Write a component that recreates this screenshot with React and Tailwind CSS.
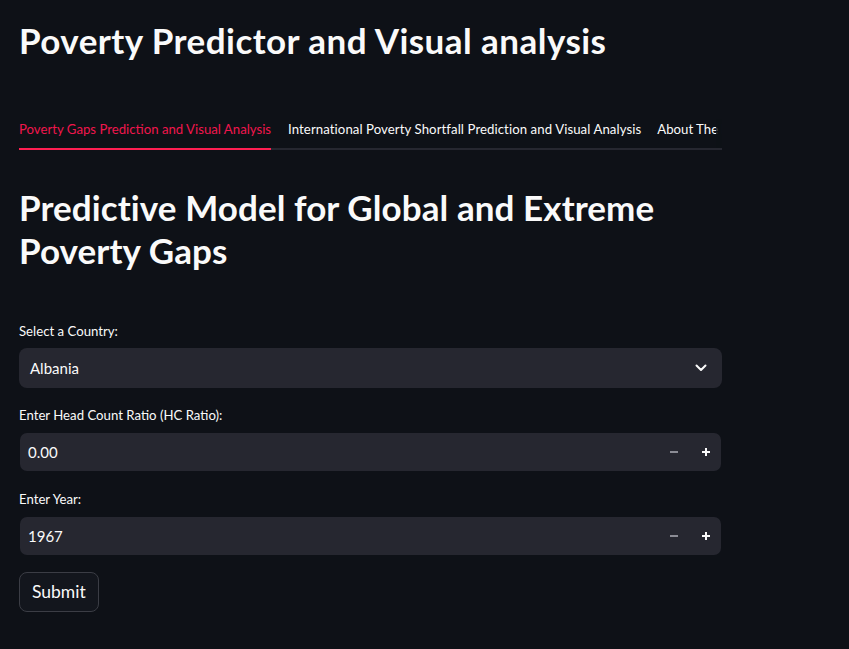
function Chevron() {
  return (
    <svg width="12" height="8" viewBox="0 0 12 8" fill="none" className="shrink-0">
      <path d="M1.5 1.5 L6 6 L10.5 1.5" stroke="#fafafa" strokeWidth="2" strokeLinecap="round" strokeLinejoin="round" />
    </svg>
  );
}

function Minus() {
  return (
    <svg width="10" height="10" viewBox="0 0 10 10">
      <rect x="1" y="4" width="8" height="2" fill="#8b8c95" />
    </svg>
  );
}

function Plus() {
  return (
    <svg width="10" height="10" viewBox="0 0 10 10">
      <rect x="1" y="4" width="8" height="2" fill="#fafafa" />
      <rect x="4" y="1" width="2" height="8" fill="#fafafa" />
    </svg>
  );
}

function Label({ children }) {
  return (
    <div className="h-[20px] leading-[20px] text-[13.2px] text-[#fafafa] mb-[7px] whitespace-nowrap">{children}</div>
  );
}

function NumberInput({ value }) {
  return (
    <div className="h-[40px] p-[1px]">
      <div className="h-full rounded-[7px] bg-[#262730] flex items-center">
        <div className="flex-1 pl-[8px] text-[15px] leading-[18px] text-[#fafafa] -translate-y-[0.5px]">{value}</div>
        <div className="w-[30px] h-full flex items-center justify-center mr-[2px]">
          <Minus />
        </div>
        <div className="w-[30px] h-full flex items-center justify-center">
          <Plus />
        </div>
      </div>
    </div>
  );
}

export default function App() {
  return (
    <div className="min-h-[649px] bg-[#0e1117] text-[#fafafa] font-[family-name:Lato,sans-serif]">
      <div className="w-[703px] ml-[19px] pt-[18px] pb-[37px] flex flex-col">
        <h1 className="text-[35px] leading-[44px] font-bold tracking-[0.45px] whitespace-nowrap">
          Poverty Predictor and Visual analysis
        </h1>

        <div className="relative mt-[57px] overflow-hidden">
          <div className="flex gap-[16px] border-b-2 border-[#262730] whitespace-nowrap">
            <div className="h-[31px] text-[13.2px] leading-[20px] text-[#f0164d] border-b-2 border-[#ff1f52] mb-[-2px] shrink-0">
              Poverty Gaps Prediction and Visual Analysis
            </div>
            <div className="h-[29px] pl-[1px] text-[13.2px] leading-[20px] tracking-[0.08px] text-[#fafafa] shrink-0">
              International Poverty Shortfall Prediction and Visual Analysis
            </div>
            <div className="h-[29px] text-[13.2px] leading-[20px] text-[#fafafa] shrink-0">
              About The Project
            </div>
          </div>
          <div className="absolute right-0 top-0 h-[29px] w-[6px] bg-[#0e1117]/80" />
        </div>

        <h2 className="mt-[36px] text-[35px] leading-[43px] font-bold tracking-[0.08px]">
          Predictive Model for Global and Extreme Poverty Gaps
        </h2>

        <div className="mt-[49px]">
          <Label>Select a Country:</Label>
          <div className="h-[40px] rounded-[8px] bg-[#262730] flex items-center pl-[11px] pr-[15px]">
            <div className="flex-1 text-[15px] leading-[18px]">Albania</div>
            <Chevron />
          </div>
        </div>

        <div className="mt-[17px]">
          <Label>Enter Head Count Ratio (HC Ratio):</Label>
          <NumberInput value="0.00" />
        </div>

        <div className="mt-[17px]">
          <Label>Enter Year:</Label>
          <NumberInput value="1967" />
        </div>

        <div className="mt-[16px]">
          <button className="h-[40px] px-[12px] rounded-[8px] border border-[#3b3d45] bg-[#13161d] text-[17.5px] leading-[20px] text-[#fafafa]">
            Submit
          </button>
        </div>
      </div>
    </div>
  );
}
